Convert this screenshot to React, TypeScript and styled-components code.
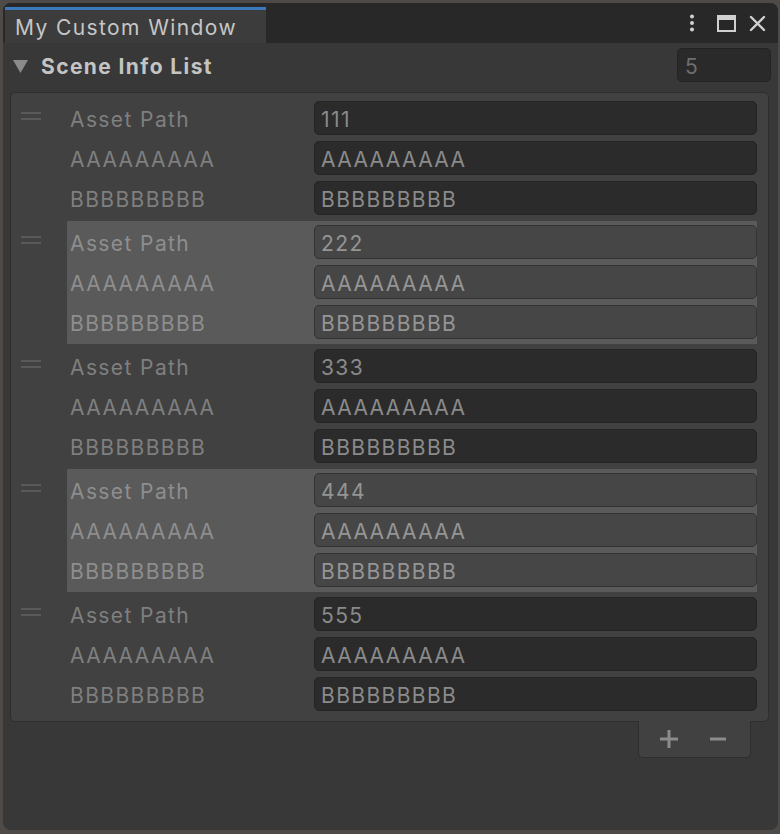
import styled, { createGlobalStyle } from 'styled-components';

const GlobalStyle = createGlobalStyle`
  html, body {
    margin: 0;
    padding: 0;
    background: #4d4a47;
    height: 100%;
  }
  #root {
    height: 100%;
  }
`;

const ITEMS = [
  { id: 1, path: '111', a: 'AAAAAAAAA', b: 'BBBBBBBBB', selected: false },
  { id: 2, path: '222', a: 'AAAAAAAAA', b: 'BBBBBBBBB', selected: true },
  { id: 3, path: '333', a: 'AAAAAAAAA', b: 'BBBBBBBBB', selected: false },
  { id: 4, path: '444', a: 'AAAAAAAAA', b: 'BBBBBBBBB', selected: true },
  { id: 5, path: '555', a: 'AAAAAAAAA', b: 'BBBBBBBBB', selected: false },
];

const Page = styled.div`
  height: 834px;
  padding: 3px 2px 4px 3px;
  box-sizing: border-box;
  font-family: Inter, 'Noto Sans', sans-serif;
  font-size: 21px;
  letter-spacing: 1.4px;
`;

const Window = styled.div`
  display: flex;
  flex-direction: column;
  height: 100%;
  background: #383838;
  border-radius: 8px;
  overflow: hidden;
`;

const TabBar = styled.div`
  display: flex;
  align-items: flex-end;
  height: 40px;
  flex-shrink: 0;
  background: #282828;
  padding-left: 2px;
`;

const Tab = styled.div`
  display: flex;
  align-items: center;
  width: 261px;
  height: 36px;
  box-sizing: border-box;
  padding: 1px 0 0 10px;
  background: #3c3c3c;
  border-top: 3px solid #3a79bb;
  color: #c6c6c6;
`;

const TabTools = styled.div`
  display: flex;
  align-items: center;
  margin-left: auto;
  align-self: center;
  padding-right: 12px;
  color: #d0d0d0;
  svg {
    display: block;
  }
`;

const ToolSlot = styled.span<{ $gap: number }>`
  margin-left: ${({ $gap }) => $gap}px;
`;

const Body = styled.div`
  flex: 1;
  display: flex;
  flex-direction: column;
  padding: 5px 9px 0 7px;
`;

const HeaderRow = styled.div`
  display: flex;
  align-items: center;
  height: 34px;
  margin-right: -2px;
  margin-bottom: 10px;
`;

const Foldout = styled.div`
  display: flex;
  align-items: center;
  gap: 13px;
  padding: 2px 0 0 3px;
  color: #c4c4c4;
  font-weight: 700;
`;

const SizeField = styled.div`
  margin-left: auto;
  width: 94px;
  height: 34px;
  box-sizing: border-box;
  display: flex;
  align-items: center;
  padding: 2px 0 0 7px;
  background: #2a2a2a;
  border: 1px solid #232323;
  border-radius: 5px;
  color: #6e6e6e;
`;

const ListBox = styled.div`
  display: flex;
  flex-direction: column;
  padding: 4px 11px 4px 0;
  background: #414141;
  border: 1px solid #2e2e2e;
  border-radius: 5px;
`;

const Element = styled.div`
  display: flex;
  margin-bottom: 1px;
`;

const Handle = styled.div`
  width: 56px;
  flex-shrink: 0;
  padding: 15px 0 0 10px;
  box-sizing: border-box;
  span {
    display: block;
    width: 20px;
    height: 2px;
    background: #595959;
    margin-bottom: 4px;
  }
`;

const Fields = styled.div<{ $selected: boolean }>`
  flex: 1;
  display: flex;
  flex-direction: column;
  gap: 6px;
  padding: 4px 0 5px 3px;
  background: ${({ $selected }) => ($selected ? '#5a5a5a' : 'transparent')};
`;

const PropRow = styled.div`
  display: flex;
  align-items: center;
  height: 34px;
  padding-top: 2px;
  box-sizing: border-box;
`;

const Label = styled.div<{ $selected: boolean }>`
  width: 244px;
  flex-shrink: 0;
  color: ${({ $selected }) => ($selected ? '#8e8e8e' : '#7f7f7f')};
`;

const TextField = styled.div<{ $selected: boolean }>`
  flex: 1;
  height: 34px;
  margin-top: -2px;
  box-sizing: border-box;
  display: flex;
  align-items: center;
  padding: 2px 0 0 6px;
  background: ${({ $selected }) => ($selected ? '#464646' : '#2b2b2b')};
  border: 1px solid ${({ $selected }) => ($selected ? '#333333' : '#242424')};
  border-radius: 5px;
  color: ${({ $selected }) => ($selected ? '#959595' : '#8a8a8a')};
`;

const Footer = styled.div`
  display: flex;
  justify-content: flex-end;
  padding-right: 18px;
`;

const FooterButtons = styled.div`
  display: flex;
  align-items: center;
  gap: 30px;
  width: 113px;
  height: 37px;
  margin-top: -1px;
  box-sizing: border-box;
  padding-left: 20px;
  background: #414141;
  border: 1px solid #2e2e2e;
  border-top: none;
  border-radius: 0 0 5px 5px;
  color: #8c8c8c;
  svg {
    display: block;
  }
`;

function Kebab() {
  return (
    <svg width="6" height="18" viewBox="0 0 6 18">
      <circle cx="3" cy="2.5" r="2" fill="currentColor" />
      <circle cx="3" cy="9" r="2" fill="currentColor" />
      <circle cx="3" cy="15.5" r="2" fill="currentColor" />
    </svg>
  );
}

function Maximize() {
  return (
    <svg width="19" height="17" viewBox="0 0 19 17">
      <rect x="1" y="1" width="17" height="15" fill="none" stroke="currentColor" strokeWidth="2" />
      <rect x="1" y="1" width="17" height="4" fill="currentColor" />
    </svg>
  );
}

function Close() {
  return (
    <svg width="17" height="17" viewBox="0 0 17 17">
      <path d="M2 2 L15 15 M15 2 L2 15" stroke="currentColor" strokeWidth="2.4" strokeLinecap="round" />
    </svg>
  );
}

function Triangle() {
  return (
    <svg width="15" height="13" viewBox="0 0 15 13">
      <path d="M0 0 H15 L7.5 13 Z" fill="#8a8a8a" />
    </svg>
  );
}

function Plus() {
  return (
    <svg width="20" height="20" viewBox="0 0 20 20">
      <path d="M10 1 V19 M1 10 H19" stroke="currentColor" strokeWidth="3" />
    </svg>
  );
}

function Minus() {
  return (
    <svg width="18" height="20" viewBox="0 0 18 20">
      <path d="M1 10 H17" stroke="currentColor" strokeWidth="3" />
    </svg>
  );
}

export default function App() {
  return (
    <>
      <GlobalStyle />
      <Page>
        <Window>
          <TabBar>
            <Tab>My Custom Window</Tab>
            <TabTools>
              <Kebab />
              <ToolSlot $gap={22}>
                <Maximize />
              </ToolSlot>
              <ToolSlot $gap={13}>
                <Close />
              </ToolSlot>
            </TabTools>
          </TabBar>
          <Body>
            <HeaderRow>
              <Foldout>
                <Triangle />
                Scene Info List
              </Foldout>
              <SizeField>5</SizeField>
            </HeaderRow>
            <ListBox>
              {ITEMS.map((item) => (
                <Element key={item.id}>
                  <Handle>
                    <span />
                    <span />
                  </Handle>
                  <Fields $selected={item.selected}>
                    <PropRow>
                      <Label $selected={item.selected}>Asset Path</Label>
                      <TextField $selected={item.selected}>{item.path}</TextField>
                    </PropRow>
                    <PropRow>
                      <Label $selected={item.selected}>AAAAAAAAA</Label>
                      <TextField $selected={item.selected}>{item.a}</TextField>
                    </PropRow>
                    <PropRow>
                      <Label $selected={item.selected}>BBBBBBBBB</Label>
                      <TextField $selected={item.selected}>{item.b}</TextField>
                    </PropRow>
                  </Fields>
                </Element>
              ))}
            </ListBox>
            <Footer>
              <FooterButtons>
                <Plus />
                <Minus />
              </FooterButtons>
            </Footer>
          </Body>
        </Window>
      </Page>
    </>
  );
}
